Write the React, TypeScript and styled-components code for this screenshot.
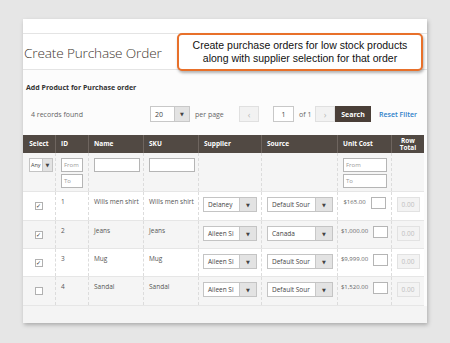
import React from 'react'
import styled, { createGlobalStyle } from 'styled-components'

const Global = createGlobalStyle`
  html, body {
    margin: 0;
    padding: 0;
    background: #e6e6e6;
    font-family: 'Open Sans', 'DejaVu Sans', sans-serif;
  }
`

const Page = styled.div`
  width: 450px;
  height: 343px;
  padding: 19px 0 0 23px;
  box-sizing: border-box;
`

const Card = styled.div`
  position: relative;
  width: 404px;
  height: 304px;
  background: #fcfcfc;
  box-shadow: 1px 2px 4px rgba(0, 0, 0, 0.25);
  display: flex;
  flex-direction: column;
`

const TopStrip = styled.div`
  height: 14px;
  border-bottom: 1px solid #e4e4e4;
  background: #fff;
`

const TitleBar = styled.div`
  height: 35px;
  display: flex;
  align-items: center;
  border-bottom: 1px solid #e4e4e4;
  background: #fff;
`

const Title = styled.h1`
  margin: 1px 0 0 1px;
  font-size: 13.6px;
  font-weight: 300;
  color: #41362f;
  letter-spacing: -0.15px;
`

const Callout = styled.div`
  position: absolute;
  left: 154px;
  top: 14px;
  width: 246px;
  height: 38px;
  box-sizing: border-box;
  border: 2px solid #e8702a;
  border-radius: 5px;
  background: #fff;
  box-shadow: 1px 2px 3px rgba(0, 0, 0, 0.3);
  display: flex;
  flex-direction: column;
  align-items: center;
  justify-content: center;
  font-family: 'Liberation Sans', Arial, sans-serif;
  font-size: 10.5px;
  line-height: 13px;
  color: #111;
`

const Section = styled.div`
  padding: 13px 0 0 3px;
`

const SectionTitle = styled.div`
  font-size: 7px;
  font-weight: 700;
  color: #333;
`

const Toolbar = styled.div`
  display: flex;
  align-items: center;
  height: 16px;
  margin-top: 14px;
  font-size: 7px;
  color: #666;
`

const Found = styled.span`
  margin-left: 5px;
  width: 119px;
`

const PerPage = styled.div`
  display: flex;
  width: 40px;
  height: 16px;
  box-sizing: border-box;
  border: 1px solid #c8c8c8;
  background: #fff;
`

const SelectValue = styled.span<{ $pad?: number }>`
  flex: 1;
  display: flex;
  align-items: center;
  padding-left: ${(p) => p.$pad ?? 4}px;
  color: #444;
  white-space: nowrap;
  overflow: hidden;
`

const Arrow = styled.span<{ $w: number }>`
  width: ${(p) => p.$w}px;
  flex: none;
  background: #e3e3e3;
  border-left: 1px solid #c8c8c8;
  display: flex;
  align-items: center;
  justify-content: center;
  font-size: 5px;
  color: #444;
`

const Label = styled.span<{ $w: number }>`
  width: ${(p) => p.$w}px;
  padding-left: 5px;
  box-sizing: border-box;
`

const NavButton = styled.span`
  width: 20px;
  height: 16px;
  box-sizing: border-box;
  border: 1px solid #e0e0e0;
  background: #f2f2f2;
  color: #b8b8b8;
  display: flex;
  align-items: center;
  justify-content: center;
  font-size: 9px;
`

const PageInput = styled.span`
  width: 21px;
  height: 16px;
  box-sizing: border-box;
  border: 1px solid #c8c8c8;
  background: #fff;
  margin-left: 14px;
  display: flex;
  align-items: center;
  justify-content: center;
  color: #444;
`

const SearchButton = styled.span`
  width: 36px;
  height: 16px;
  background: #4a3f38;
  color: #fff;
  font-weight: 700;
  display: flex;
  align-items: center;
  justify-content: center;
`

const ResetLink = styled.span`
  margin-left: 8px;
  color: #2f80c9;
  font-weight: 600;
`

const Table = styled.div`
  margin-top: 13px;
  width: 401px;
`

const cols = '32px 33px 55px 55px 63px 76px 54px 33px'

const HeadRow = styled.div`
  display: grid;
  grid-template-columns: ${cols};
  height: 18px;
  background: #514943;
`

const HeadCell = styled.div<{ $center?: boolean }>`
  display: flex;
  flex-direction: column;
  justify-content: center;
  align-items: ${(p) => (p.$center ? 'center' : 'flex-start')};
  padding-left: ${(p) => (p.$center ? 0 : 5)}px;
  border-left: 1px solid #6e655f;
  color: #fff;
  font-size: 6.5px;
  font-weight: 700;
  line-height: 7.5px;
  &:first-child {
    border-left: none;
  }
`

const Row = styled.div<{ $h: number; $alt?: boolean }>`
  display: grid;
  grid-template-columns: ${cols};
  height: ${(p) => p.$h}px;
  background: ${(p) => (p.$alt ? '#f5f5f5' : '#fff')};
  border-bottom: 1px solid #e6e6e6;
  box-sizing: border-box;
`

const Cell = styled.div<{ $center?: boolean; $pad?: number }>`
  border-left: 1px dashed #dcdcdc;
  padding: 5px 0 0 ${(p) => p.$pad ?? 5}px;
  box-sizing: border-box;
  font-size: 6.5px;
  color: #555;
  display: flex;
  flex-direction: column;
  gap: 2px;
  align-items: ${(p) => (p.$center ? 'center' : 'flex-start')};
  &:first-child {
    border-left: none;
  }
`

const CheckCell = styled(Cell)`
  padding: 0;
  justify-content: center;
`

const FilterInput = styled.span<{ $w: number }>`
  width: ${(p) => p.$w}px;
  height: 14px;
  box-sizing: border-box;
  border: 1px solid #b5b5b5;
  background: #fff;
  display: flex;
  align-items: center;
  padding-left: 2px;
  color: #999;
  font-size: 6px;
`

const Dropdown = styled.div<{ $w: number; $h?: number; $small?: boolean }>`
  display: flex;
  width: ${(p) => p.$w}px;
  height: ${(p) => p.$h ?? 15}px;
  box-sizing: border-box;
  border: 1px solid #c4c4c4;
  background: #fff;
  font-size: ${(p) => (p.$small ? 5.5 : 6.5)}px;
`

const Check = styled.span<{ $on: boolean }>`
  width: 8px;
  height: 8px;
  box-sizing: border-box;
  border: 1px solid #b0b0b0;
  background: #fff;
  display: flex;
  align-items: center;
  justify-content: center;
  font-size: 6px;
  line-height: 1;
  color: #333;
  margin-right: 1px;
`

const CostWrap = styled.div`
  display: flex;
  align-items: flex-start;
  justify-content: center;
  gap: 5px;
  width: 100%;
`

const CostText = styled.span`
  font-size: 6px;
  color: #666;
  padding-top: 1px;
`

const QtyBox = styled.span`
  width: 15px;
  height: 12px;
  box-sizing: border-box;
  border: 1px solid #b5b5b5;
  background: #fff;
`

const TotalBox = styled.span`
  width: 23px;
  height: 15px;
  box-sizing: border-box;
  border: 1px solid #e2e2e2;
  background: #f3f3f3;
  color: #c0c0c0;
  display: flex;
  align-items: center;
  justify-content: center;
  font-size: 6.5px;
`

const Footer = styled.div`
  flex: 1;
  background: #f4f4f4;
`

const rows = [
  { id: 1, name: 'Wills men shirt', supplier: 'Delaney', source: 'Default Sour', cost: '$165.00', on: true, h: 29 },
  { id: 2, name: 'Jeans', supplier: 'Aileen Si', source: 'Canada', cost: '$1,000.00', on: true, h: 28 },
  { id: 3, name: 'Mug', supplier: 'Aileen Si', source: 'Default Sour', cost: '$9,999.00', on: true, h: 28 },
  { id: 4, name: 'Sandal', supplier: 'Aileen Si', source: 'Default Sour', cost: '$1,520.00', on: false, h: 29 },
]

function App() {
  return (
    <Page>
      <Global />
      <Card>
        <TopStrip />
        <TitleBar>
          <Title>Create Purchase Order</Title>
        </TitleBar>
        <Callout>
          <div>Create purchase orders for low stock products</div>
          <div>along with supplier selection for that order</div>
        </Callout>

        <Section>
          <SectionTitle>Add Product for Purchase order</SectionTitle>
          <Toolbar>
            <Found>4 records found</Found>
            <PerPage>
              <SelectValue>20</SelectValue>
              <Arrow $w={14}>▼</Arrow>
            </PerPage>
            <Label $w={49}>per page</Label>
            <NavButton>‹</NavButton>
            <PageInput>1</PageInput>
            <Label $w={21}>of 1</Label>
            <NavButton>›</NavButton>
            <SearchButton>Search</SearchButton>
            <ResetLink>Reset Filter</ResetLink>
          </Toolbar>
        </Section>

        <Table>
          <HeadRow>
            <HeadCell $center>Select</HeadCell>
            <HeadCell>ID</HeadCell>
            <HeadCell>Name</HeadCell>
            <HeadCell>SKU</HeadCell>
            <HeadCell>Supplier</HeadCell>
            <HeadCell>Source</HeadCell>
            <HeadCell>Unit Cost</HeadCell>
            <HeadCell $center>
              <span>Row</span>
              <span>Total</span>
            </HeadCell>
          </HeadRow>

          <Row $h={39} $alt>
            <Cell $pad={6}>
              <Dropdown $w={24} $h={14} $small>
                <SelectValue $pad={1}>Any</SelectValue>
                <Arrow $w={9}>▼</Arrow>
              </Dropdown>
            </Cell>
            <Cell>
              <FilterInput $w={22}>From</FilterInput>
              <FilterInput $w={22}>To</FilterInput>
            </Cell>
            <Cell>
              <FilterInput $w={46} />
            </Cell>
            <Cell>
              <FilterInput $w={46} />
            </Cell>
            <Cell />
            <Cell />
            <Cell>
              <FilterInput $w={44}>From</FilterInput>
              <FilterInput $w={44}>To</FilterInput>
            </Cell>
            <Cell />
          </Row>

          {rows.map((r, i) => (
            <Row key={r.id} $h={r.h} $alt={i % 2 === 1}>
              <CheckCell $center>
                <Check $on={r.on}>{r.on ? '✓' : ''}</Check>
              </CheckCell>
              <Cell>{r.id}</Cell>
              <Cell>{r.name}</Cell>
              <Cell>{r.name}</Cell>
              <Cell $pad={4}>
                <Dropdown $w={54}>
                  <SelectValue>{r.supplier}</SelectValue>
                  <Arrow $w={16}>▼</Arrow>
                </Dropdown>
              </Cell>
              <Cell>
                <Dropdown $w={66}>
                  <SelectValue>{r.source}</SelectValue>
                  <Arrow $w={16}>▼</Arrow>
                </Dropdown>
              </Cell>
              <Cell $pad={0}>
                <CostWrap>
                  <CostText>{r.cost}</CostText>
                  <QtyBox />
                </CostWrap>
              </Cell>
              <Cell $center $pad={0}>
                <TotalBox>0.00</TotalBox>
              </Cell>
            </Row>
          ))}
        </Table>
        <Footer />
      </Card>
    </Page>
  )
}

export default App
